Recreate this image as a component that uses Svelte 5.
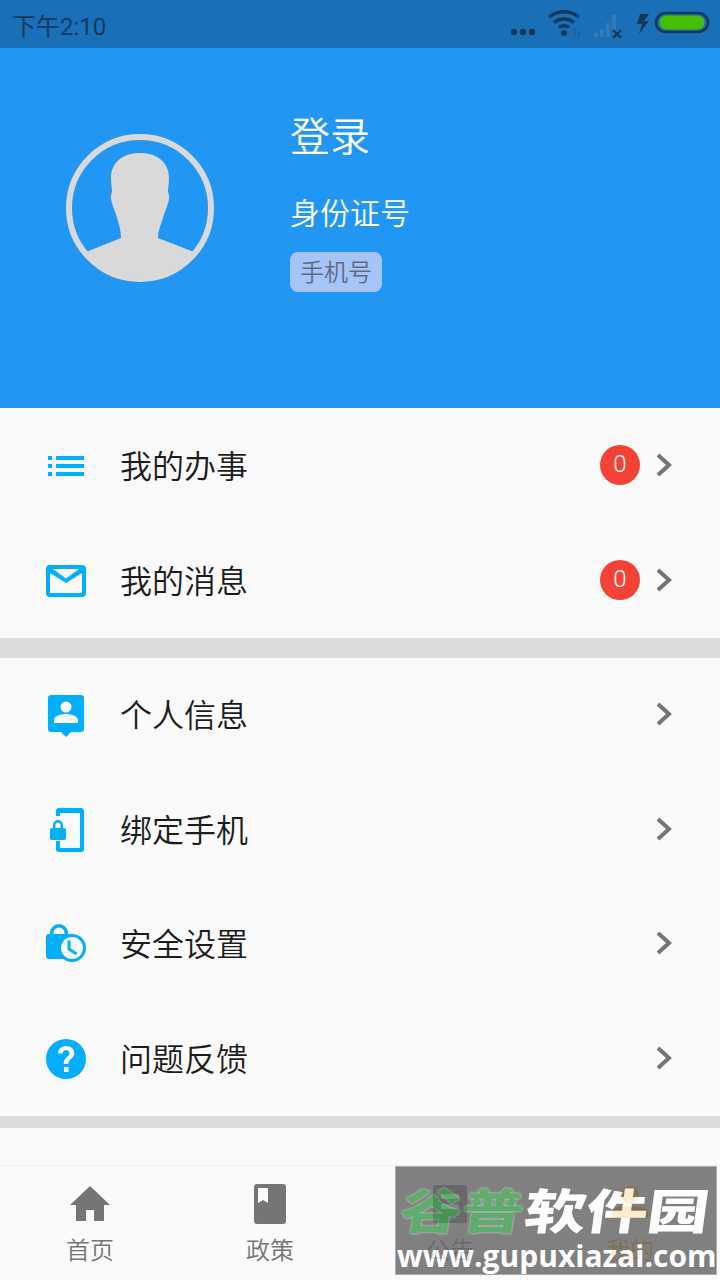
<script>
  const group1 = [
    { label: '我的办事', icon: 'list', badge: 0 },
    { label: '我的消息', icon: 'mail', badge: 0 }
  ];
  const group2 = [
    { label: '个人信息', icon: 'person' },
    { label: '绑定手机', icon: 'phone' },
    { label: '安全设置', icon: 'lock' },
    { label: '问题反馈', icon: 'help' }
  ];
  const tabs = [
    { label: '首页', icon: 'home' },
    { label: '政策', icon: 'book' },
    { label: '公告', icon: 'notice' },
    { label: '我的', icon: 'me', active: true }
  ];
</script>

{#snippet rowIcon(name)}
  <svg class="ri" viewBox="0 0 40 44" width="40" height="44" aria-hidden="true">
    {#if name === 'list'}
      <path d="M2 12h4v4H2zM2 20h4v4H2zM2 28h4v4H2zM10 12h28v4H10zM10 20h28v4H10zM10 28h28v4H10z" />
    {:else if name === 'mail'}
      <path fill-rule="evenodd" d="M4 6h32a4 4 0 0 1 4 4v24a4 4 0 0 1-4 4H4a4 4 0 0 1-4-4V10a4 4 0 0 1 4-4zM4 14v20h32V14L20 24zM7 10l13 9.500L33 10z" />
    {:else if name === 'person'}
      <path fill-rule="evenodd" d="M5 2h30a3 3 0 0 1 3 3v31a3 3 0 0 1-3 3H25l-5 5-5-5H5a3 3 0 0 1-3-3V5a3 3 0 0 1 3-3zM20 8.500a5.500 5.500 0 1 0 0 11 5.500 5.500 0 0 0 0-11zM8 30h24v-3c0-4-7-6-12-6s-12 2-12 6z" />
    {:else if name === 'phone'}
      <path d="M13 0h22a3 3 0 0 1 3 3v38a3 3 0 0 1-3 3H13a3 3 0 0 1-3-3v-8h4v7h20V5H14v3h-4V3a3 3 0 0 1 3-3z" />
      <path fill-rule="evenodd" d="M7 20v-3a5 5 0 0 1 10 0v3h1a2 2 0 0 1 2 2v8a2 2 0 0 1-2 2H6a2 2 0 0 1-2-2v-8a2 2 0 0 1 2-2zM9.500 20h5v-3a2.500 2.500 0 0 0-5 0z" />
    {:else if name === 'lock'}
      <path fill-rule="evenodd" d="M4 12v-1a9 9 0 0 1 18 0v1h2a2 2 0 0 1 2 2v23H3a3 3 0 0 1-3-3V15a3 3 0 0 1 3-3zM7.500 12h11v-1a5.500 5.500 0 0 0-11 0z" />
      <circle cx="26" cy="26" r="14" />
      <circle cx="26" cy="26" r="11" fill="#fafafa" />
      <path d="M23 18.500v8.500l7.500 5" fill="none" stroke="#03aefa" stroke-width="3" />
    {:else if name === 'help'}
      <path fill-rule="evenodd" d="M20 2a20 20 0 1 1 0 40 20 20 0 0 1 0-40zM18 30v5h4.500v-5zM20 9c-4.500 0-8 3-8 7.500h4.500c0-2 1.500-3.500 3.500-3.500s3.500 1.300 3.500 3.200c0 3.800-5.800 3.800-5.800 10.800H22.300c0-4.800 6-5.500 6-11 0-4.200-3.500-7-8.300-7z" />
    {/if}
  </svg>
{/snippet}

{#snippet chevron()}
  <svg class="chev" viewBox="0 0 16 24" width="16" height="24" aria-hidden="true">
    <path d="M2 2l11 10L2 22" fill="none" stroke="#757575" stroke-width="4" />
  </svg>
{/snippet}

{#snippet row(item)}
  <div class="row">
    <div class="icon">{@render rowIcon(item.icon)}</div>
    <div class="label">{item.label}</div>
    {#if item.badge !== undefined}<div class="badge">{item.badge}</div>{/if}
    {@render chevron()}
  </div>
{/snippet}

{#snippet tabIcon(name)}
  <svg viewBox="0 0 48 48" width="48" height="48" aria-hidden="true">
    {#if name === 'home'}
      <path d="M24 6L4 25h6v16h10V30h8v11h10V25h6z" />
    {:else if name === 'book'}
      <path fill-rule="evenodd" d="M11 4h26a3 3 0 0 1 3 3v34a3 3 0 0 1-3 3H11a3 3 0 0 1-3-3V7a3 3 0 0 1 3-3zM12 8v15l5-3 5 3V8z" />
    {:else if name === 'notice'}
      <path fill-rule="evenodd" d="M10 5h28a3 3 0 0 1 3 3v32a3 3 0 0 1-3 3H10a3 3 0 0 1-3-3V8a3 3 0 0 1 3-3zM15 14v5h18v-5zM15 24v5h18v-5z" />
    {:else if name === 'me'}
      <path d="M24 6a9 9 0 1 1 0 18 9 9 0 0 1 0-18zM6 32c0-4 9-6 18-6s18 2 18 6v6H6z" />
    {/if}
  </svg>
{/snippet}

<div class="app">
  <div class="status">
    <span class="time">下午2:10</span>
    <div class="sys">
      <svg viewBox="0 0 200 32" width="200" height="32" aria-hidden="true">
        <circle cx="4" cy="26" r="3.200" fill="#12395c" />
        <circle cx="13" cy="26" r="3.200" fill="#12395c" />
        <circle cx="22" cy="26" r="3.200" fill="#12395c" />
        <path d="M39 11a24 24 0 0 1 30 0M44 16.500a16 16 0 0 1 20 0M49 21.500a9 9 0 0 1 10 0" fill="none" stroke="#12395c" stroke-width="3.500" />
        <circle cx="54" cy="27" r="3" fill="#12395c" />
        <path d="M64 22h2v9h-2zM68 25h2v6h-2z" fill="#2a5f8f" />
        <path d="M84 31h4v-4h-4zM90 31h4v-8h-4zM96 31h4V17h-4zM102 23h4V9h-4z" fill="#327ab8" />
        <path d="M103 24l8 8M111 24l-8 8" stroke="#12395c" stroke-width="2" />
        <path d="M130 11h9l-5 7h5l-10 13 3-10h-5z" fill="#12395c" transform="translate(0 -3)" />
        <rect x="146" y="7" width="52" height="19" rx="9.500" fill="#1e6aad" stroke="#12395c" stroke-width="2.500" />
        <rect x="149.500" y="9.500" width="45" height="14" rx="7" fill="#47bf00" />
      </svg>
    </div>
  </div>

  <header class="hero">
    <div class="avatar">
      <svg viewBox="0 0 148 148" width="148" height="148" aria-hidden="true">
        <circle cx="74" cy="74" r="71" fill="none" stroke="#d9d9d9" stroke-width="6" />
        <path fill="#d9d9d9" d="M74 19C56 19 45 29 45 44C45 50 46 54 46 58C44 62 45 66 46 69C47 74 50 79 51 84C53 90 55 97 55 104L18.700 118.500A71 71 0 0 0 129.300 118.500L92 104C92 97 95 90 97 84C98 79 101 74 102 69C103 66 104 62 102 58C102 54 103 50 103 44C103 29 92 19 74 19z" />
      </svg>
    </div>
    <div class="who">
      <div class="name">登录</div>
      <div class="id">身份证号</div>
      <div class="chip">手机号</div>
    </div>
  </header>

  <section class="group g1">
    {#each group1 as item}{@render row(item)}{/each}
  </section>
  <div class="sep big"></div>
  <section class="group g2">
    {#each group2 as item}{@render row(item)}{/each}
  </section>
  <div class="sep small"></div>
  <div class="spacer"></div>

  <nav class="tabs">
    {#each tabs as t}
      <div class="tab" class:active={t.active}>
        {@render tabIcon(t.icon)}
        <span>{t.label}</span>
      </div>
    {/each}
  </nav>

  <div class="mark">
    <div class="cn"><b>谷普</b><i>软件园</i></div>
    <div class="url">www.gupuxiazai.com</div>
  </div>
</div>

<style>
  :global(body) {
    margin: 0;
    background: #fafafa;
  }
  .app {
    position: relative;
    width: 720px;
    height: 1280px;
    overflow: hidden;
    display: flex;
    flex-direction: column;
    background: #fafafa;
    font-family: Roboto, "Noto Sans CJK SC", sans-serif;
    font-weight: 350;
  }
  .status {
    height: 48px;
    flex: none;
    background: #1a6fb9;
    display: flex;
    align-items: center;
    justify-content: space-between;
    padding: 0 10px 0 12px;
  }
  .time {
    font-size: 24px;
    font-weight: 400;
    color: #12395c;
  }
  .sys {
    display: flex;
    margin-top: -4px;
  }
  .sys svg {
    display: block;
  }
  .hero {
    height: 360px;
    flex: none;
    box-sizing: border-box;
    background: #2196f3;
    display: flex;
    padding: 86px 0 0 66px;
  }
  .avatar {
    width: 148px;
    height: 148px;
    flex: none;
  }
  .avatar svg {
    display: block;
  }
  .who {
    margin-left: 76px;
    margin-top: -26px;
    color: #fff;
  }
  .name {
    font-size: 40px;
    line-height: 60px;
    height: 60px;
  }
  .id {
    font-size: 30px;
    line-height: 44px;
    margin-top: 24px;
  }
  .chip {
    width: 92px;
    height: 40px;
    margin-top: 16px;
    border-radius: 8px;
    background: #a5c4f8;
    color: #5f6b82;
    font-size: 24px;
    line-height: 42px;
    text-align: center;
  }
  .group {
    flex: none;
    background: #fafafa;
    display: flex;
    flex-direction: column;
  }
  .g1 { height: 230px; }
  .g2 { height: 458px; }
  .row {
    flex: 1;
    display: flex;
    align-items: center;
    padding: 0 48px 0 46px;
  }
  .icon {
    width: 40px;
    height: 44px;
    flex: none;
    margin-right: 34px;
  }
  .ri {
    display: block;
    fill: #03aefa;
  }
  .label {
    flex: 1;
    font-size: 32px;
    color: #1c1c1c;
    line-height: 44px;
    margin-top: 2px;
  }
  .badge {
    width: 40px;
    height: 40px;
    margin-top: -2px;
    border-radius: 50%;
    background: #f44336;
    color: #fff;
    font-size: 24px;
    line-height: 38px;
    text-align: center;
    margin-right: 16px;
  }
  .chev {
    display: block;
    margin-top: -2px;
  }
  .sep {
    flex: none;
    background: #dcdcdc;
  }
  .big { height: 20px; }
  .small { height: 12px; }
  .spacer { flex: 1; }
  .tabs {
    height: 115px;
    flex: none;
    box-sizing: border-box;
    border-top: 1px solid #f0f0f0;
    background: #fafafa;
    display: grid;
    grid-template-columns: repeat(4, 1fr);
  }
  .tab {
    display: flex;
    flex-direction: column;
    align-items: center;
    padding-top: 14px;
    color: #757575;
  }
  .tab svg {
    display: block;
    fill: #757575;
  }
  .tab span {
    font-size: 24px;
    line-height: 34px;
    margin-top: 6px;
  }
  .tab.active { color: #ff9800; }
  .tab.active svg { fill: #ff9800; }
  .mark {
    position: absolute;
    left: 395px;
    top: 1166px;
    width: 322px;
    height: 109px;
    box-sizing: border-box;
    background: #666;
    border: 1px solid #9a9a9a;
    opacity: 0.82;
    color: #fff;
    overflow: hidden;
    white-space: nowrap;
  }
  .cn {
    font-size: 48px;
    line-height: 54px;
    margin-top: 14px;
    padding-left: 4px;
    font-weight: 900;
    font-family: "Noto Sans CJK SC", sans-serif;
    transform: scaleX(1.28) skewX(-6deg);
    transform-origin: left center;
  }
  .cn b {
    color: #3f9b50;
    font-weight: 900;
    text-shadow: 0 0 2px #ddd;
  }
  .cn i {
    font-style: normal;
    margin-left: 1px;
  }
  .url {
    font-family: "Open Sans", sans-serif;
    font-weight: 700;
    font-size: 30px;
    line-height: 36px;
    margin-top: 3px;
    margin-left: 1px;
  }
</style>
